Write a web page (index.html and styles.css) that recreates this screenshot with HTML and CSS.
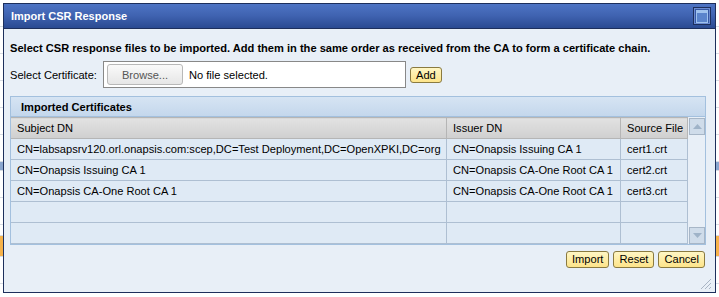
FILE: index.html
```html
<!DOCTYPE html>
<html lang="en">
<head>
  <meta charset="UTF-8" />
  <title>Import CSR Response</title>
  <link rel="stylesheet" href="styles.css">
</head>
<body>
  <div class="backdrop">
    <div class="bg-row"></div>
    <div class="bg-row"></div>
    <div class="bg-row"></div>
    <div class="bg-row"></div>
    <div class="bg-row"></div>
    <div class="bg-row"></div>
    <div class="bg-row bg-blue"></div>
    <div class="bg-row"></div>
    <div class="bg-row"></div>
    <div class="bg-row bg-short"></div>
    <div class="bg-row bg-orange"></div>
    <div class="bg-row"></div>
  </div>

  <div class="dialog">
    <div class="title-bar">
      <span class="title">Import CSR Response</span>
      <span class="max-btn"><span class="max-inner"></span></span>
    </div>
    <div class="dialog-body">
      <p class="intro">Select CSR response files to be imported. Add them in the same order as received from the CA to form a certificate chain.</p>
      <div class="file-row">
        <label>Select Certificate:</label>
        <div class="file-box">
          <span class="browse">Browse...</span>
          <span class="file-name">No file selected.</span>
        </div>
        <button class="btn">Add</button>
      </div>

      <div class="panel">
        <div class="panel-head">Imported Certificates</div>
        <div class="table-wrap">
          <table class="grid">
            <thead>
              <tr>
                <th class="c-subject">Subject DN</th>
                <th class="c-issuer">Issuer DN</th>
                <th class="c-file">Source File</th>
              </tr>
            </thead>
            <tbody>
              <tr>
                <td>CN=labsapsrv120.orl.onapsis.com:scep,DC=Test Deployment,DC=OpenXPKI,DC=org</td>
                <td>CN=Onapsis Issuing CA 1</td>
                <td>cert1.crt</td>
              </tr>
              <tr>
                <td>CN=Onapsis Issuing CA 1</td>
                <td>CN=Onapsis CA-One Root CA 1</td>
                <td>cert2.crt</td>
              </tr>
              <tr>
                <td>CN=Onapsis CA-One Root CA 1</td>
                <td>CN=Onapsis CA-One Root CA 1</td>
                <td>cert3.crt</td>
              </tr>
              <tr><td></td><td></td><td></td></tr>
              <tr><td></td><td></td><td></td></tr>
            </tbody>
          </table>
          <div class="scrollbar">
            <span class="sb-btn"><svg width="9" height="5" viewBox="0 0 9 5"><path d="M0 5 L4.5 0 L9 5 Z" fill="#9fb3c8"/></svg></span>
            <span class="sb-btn"><svg width="9" height="5" viewBox="0 0 9 5"><path d="M0 0 L4.5 5 L9 0 Z" fill="#9fb3c8"/></svg></span>
          </div>
        </div>
      </div>

      <div class="actions">
        <button class="btn">Import</button>
        <button class="btn">Reset</button>
        <button class="btn">Cancel</button>
      </div>
      <svg class="grip" width="13" height="13" viewBox="0 0 13 13">
        <path d="M12 2 L2 12 M12 6 L6 12 M12 10 L10 12" stroke="#a8b4c4" stroke-width="1"/>
      </svg>
    </div>
  </div>
</body>
</html>
```

FILE: styles.css
```css
body {
  margin: 0;
  font-family: "Liberation Sans", Arial, sans-serif;
  background: #ffffff;
  width: 719px;
  height: 297px;
  overflow: hidden;
  position: relative;
}
.backdrop {
  display: flex;
  flex-direction: column;
}
.bg-row {
  height: 26px;
  border-bottom: 1px solid #d8dde4;
}
.bg-blue {
  height: 8px;
  background: #8aa6cf;
}
.bg-short {
  height: 10px;
}
.bg-orange {
  height: 20px;
  background: #f6b24a;
}
.dialog {
  position: absolute;
  left: 3px;
  top: 3px;
  width: 711px;
  height: 288px;
  border: 1px solid #1d2f5c;
  display: flex;
  flex-direction: column;
  background: #e8eff7;
}
.title-bar {
  height: 24px;
  background: linear-gradient(#4e74c4, #3f62b0 50%, #2a4a92);
  display: flex;
  align-items: center;
  justify-content: space-between;
  padding: 0 4px 0 7px;
  border-bottom: 1px solid #1d2f5c;
}
.title {
  color: #ffffff;
  font-size: 11px;
  font-weight: bold;
}
.max-btn {
  width: 14px;
  height: 14px;
  border: 1px solid #1d2f5c;
  background: #3657a3;
  padding: 1px;
  box-shadow: inset 0 0 0 1px #6b8bd0;
}
.max-inner {
  display: block;
  width: 10px;
  height: 9px;
  margin: 1px;
  border: 1px solid #9fc2ee;
  border-top-width: 3px;
  background: #5a84cc;
}
.dialog-body {
  flex: 1;
  padding: 0 9px 0 6px;
  position: relative;
  font-size: 11.1px;
  color: #000000;
}
.intro {
  margin: 13px 0 0 0;
  font-weight: bold;
}
.file-row {
  display: flex;
  align-items: center;
  margin-top: 7px;
}
.file-row label {
  width: 93px;
  white-space: nowrap;
}
.file-box {
  width: 298px;
  height: 25px;
  border: 1px solid #888888;
  background: #ffffff;
  display: flex;
  align-items: center;
  padding-left: 3px;
}
.browse {
  width: 74px;
  height: 19px;
  border: 1px solid #b8b8b8;
  border-radius: 3px;
  background: linear-gradient(#fafafa, #e6e6e6);
  color: #555555;
  display: flex;
  align-items: center;
  justify-content: center;
}
.file-name {
  margin-left: 6px;
}
.btn {
  font-family: "Liberation Sans", Arial, sans-serif;
  font-size: 11.1px;
  height: 17px;
  padding: 0 5px;
  border: 1px solid #8a7a40;
  border-radius: 3px;
  background: linear-gradient(#fff6c4, #fde48a);
  color: #000000;
  line-height: 15px;
}
.file-row .btn {
  margin-left: 4px;
  height: 16px;
}
.panel {
  margin-top: 8px;
  border: 1px solid #a3c0de;
  width: 694px;
}
.panel-head {
  height: 19px;
  background: linear-gradient(#d6e4f3, #c4d7ec);
  font-weight: bold;
  padding-left: 10px;
  display: flex;
  align-items: center;
  border-bottom: 1px solid #a3c0de;
}
.table-wrap {
  display: flex;
  background: #e8eff7;
}
.grid {
  border-collapse: collapse;
  width: 676px;
  table-layout: fixed;
  font-size: 11.1px;
}
.grid th, .grid td {
  height: 20px;
  padding: 0 6px;
  border: 1px solid #aebfd2;
  text-align: left;
  white-space: nowrap;
  overflow: hidden;
}
.grid th {
  font-weight: normal;
  background: linear-gradient(#e2e2e2, #cfcfcf);
  border-color: #b5b5b5;
}
.grid td {
  background: #dfeaf5;
}
.grid tr > :first-child {
  border-left: none;
}
.c-subject { width: 423px; }
.c-issuer { width: 161px; }
.c-file { width: 54px; }
.scrollbar {
  width: 17px;
  display: flex;
  flex-direction: column;
  justify-content: space-between;
  padding: 1px 0 0 1px;
}
.sb-btn {
  width: 14px;
  height: 15px;
  border: 1px solid #a7b6c7;
  background: #cfdcea;
  display: flex;
  align-items: center;
  justify-content: center;
}
.actions {
  display: flex;
  justify-content: flex-end;
  gap: 4px;
  margin-top: 6px;
  width: 695px;
}
.grip {
  position: absolute;
  right: 3px;
  bottom: 2px;
}
```
